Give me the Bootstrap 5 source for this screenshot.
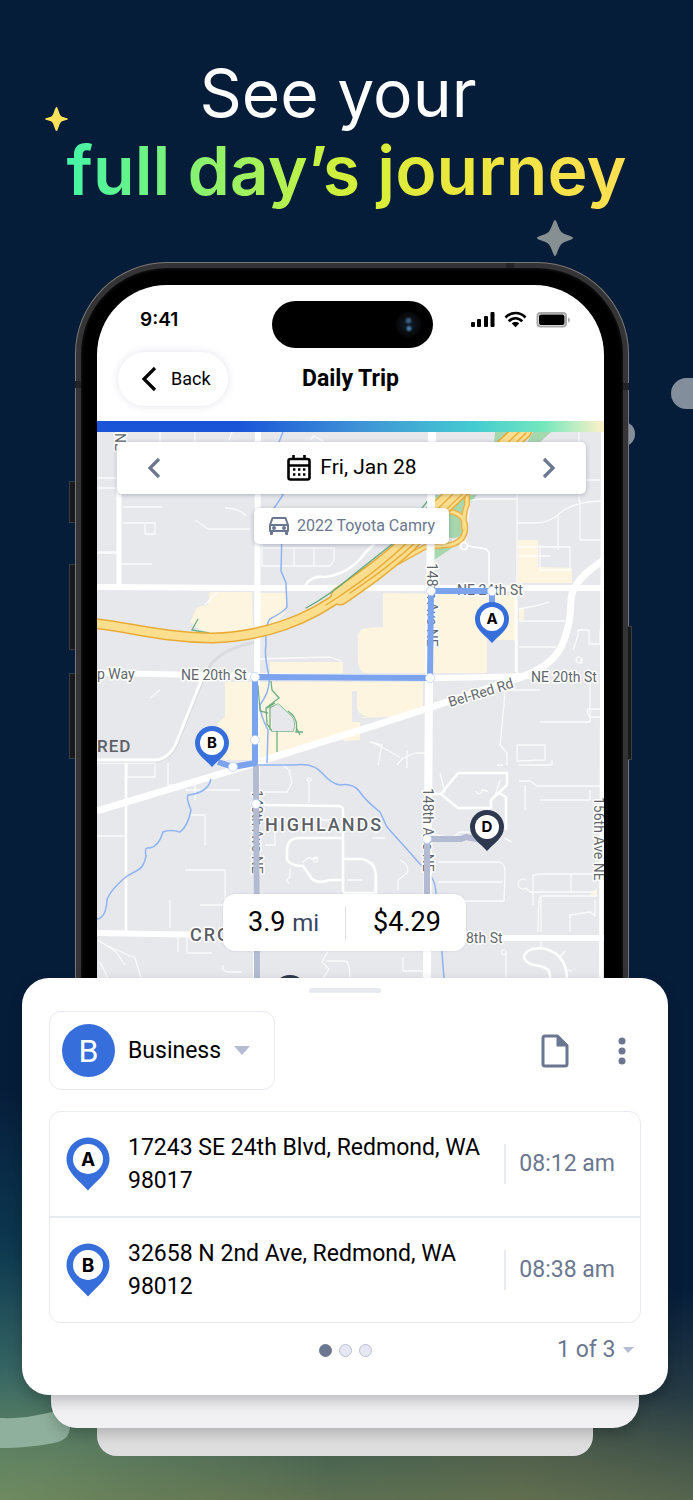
<!DOCTYPE html>
<html lang="en">
<head>
<meta charset="utf-8">
<meta name="viewport" content="width=device-width, initial-scale=1">
<title>Daily Trip</title>
<link href="https://cdn.jsdelivr.net/npm/bootstrap@5.3.0/dist/css/bootstrap.min.css" rel="stylesheet">
<style>
  :root { --navy: #061d3a; --blue: #366fdb; --slate: #6b7790; --line: #e8eaf1; }
  body { font-family: Roboto, "Liberation Sans", sans-serif; background: var(--navy); color: #000; }
  .promo {
    min-height: 100vh;
    padding: 55px 0 44px;
    background:
      radial-gradient(ellipse 95% 210px at 38% 104%, rgba(136,134,76,.85), rgba(122,132,80,.6) 40%, rgba(80,110,90,0) 100%),
      radial-gradient(ellipse 75% 440px at 0 102%, #6a9a74, rgba(62,112,104,.95) 30%, rgba(14,64,86,.75) 65%, rgba(6,29,58,0) 100%),
      linear-gradient(to top, #46584d, rgba(6,29,58,0) 210px),
      var(--navy);
  }
  .headline { font-family: Inter, sans-serif; font-size: 66px; line-height: 77px; font-weight: 400; color: #fff; padding-right: 17px; }
  .headline-strong { font-size: 68px; font-weight: 600; margin-right: -17px; }
  .headline-strong span { background: linear-gradient(90deg, #45f5a6, #8df26c 25%, #d2f03a 50%, #ebe73c 70%, #ffdf52); -webkit-background-clip: text; background-clip: text; color: transparent; }
  .deco { position: absolute; }
  .deco-spark { left: 44px; top: 106px; }
  .deco-star { left: 536px; top: 219px; }
  .deco-pill { left: 671px; right: 0; top: 378px; height: 31px; border-radius: 16px 0 0 16px; background: #838e9d; }
  .deco-dot { left: 612px; top: 422px; width: 23px; height: 24px; border-radius: 12px; background: #838e9d; }
  .deco-swoosh { left: 0; bottom: 50px; }

  .phone { margin: 53px 64px -12px 75px; padding: 23px 25px 12px 22px; border-radius: 92px 92px 0 0; background: #000;
    box-shadow: inset 0 0 0 1px #77777a, inset 0 0 0 6px #343436, inset 0 0 3px 7px #151515; }
  .side-key { position: absolute; background: #17191d; border: 1px solid #3c3e42; width: 6px; }
  .key-l { left: -6px; border-right: 0; }
  .key-r { right: -3px; width: 4px; border-left: 0; }
  .key-1 { top: 219px; height: 42px; } .key-2 { top: 302px; height: 86px; }
  .key-3 { top: 411px; height: 86px; } .key-4 { top: 364px; height: 134px; }
  .band { position: absolute; background: #232325; }
  .band-l { left: 0; top: 119px; width: 6px; height: 7px; }
  .band-r { right: 0; top: 121px; width: 6px; height: 7px; }
  .band-t { right: 115px; top: 1px; width: 8px; height: 5px; }
  .screen { background: #fff; border-radius: 70px 70px 0 0; overflow: hidden; }
  .status { height: 67px; padding: 2px 34px 0 43px; }
  .clock { font: 600 19px/24px Inter, sans-serif; }
  .island { left: 175px; top: 16px; width: 161px; height: 47px; border-radius: 24px; background: #000; }
  .lens { right: 12px; top: 11px; width: 25px; height: 25px; border-radius: 50%; background: radial-gradient(circle at 50% 35%, #3c5d7c 0 6%, rgba(0,0,0,0) 20%), radial-gradient(circle at 52% 66%, #4a7ba6 0 4%, rgba(0,0,0,0) 18%), radial-gradient(circle, #0c1722 25%, #08090b 60%); }
  .titlebar { display: grid; grid-template-columns: 1fr auto 1fr; align-items: center; padding: 0 21px 15px; }
  .back-btn { justify-self: start; height: 54px; padding: 0 17px 0 23px; border: 0; border-radius: 27px; background: #fff; font-size: 18px; line-height: 24px; gap: 14px; box-shadow: 0 0 8px rgba(40,50,90,.13); }
  .title { font-size: 23px; line-height: 28px; font-weight: 700; }
  .rainbow { height: 11px; background: linear-gradient(90deg, #1a55d8 0, #1a55d8 28%, #3f93d6 52%, #45cdd0 75%, #74e7bd 88%, #f4f1c8 99%); }
  .map-art { display: block; width: 100%; height: auto; background: #e7e8ec; }
  .over-top { top: 10px; left: 20px; right: 18px; }
  .over-bottom { bottom: 27px; left: 0; right: 12px; }
  .float-box { background: #fff; border-radius: 5px; box-shadow: 0 1px 4px rgba(40,50,80,.3); }
  .datebar { height: 52px; padding: 0 29px; font-size: 21px; }
  .plain { border: 0; background: none; padding: 0; line-height: 0; color: var(--slate); }
  .carbox { height: 36px; margin-top: 14px; padding: 0 14px; font-size: 16px; color: var(--slate); gap: 7px; }
  .stats { height: 57px; border-radius: 12px; padding: 0 25px; font-size: 27px; box-shadow: 0 0 2px rgba(40,50,80,.15); }
  .stats small { font-size: 24px; color: #39455f; }
  .stats .split { width: 1px; height: 34px; background: #dfe2ec; margin: 0 27px 0 26px; }

  .sheet { background: #fff; margin: 0 25px 0 22px; padding: 10px 27px 29px; border-radius: 27px; z-index: 3; box-shadow: 0 6px 14px rgba(0,0,0,.22); }
  .grab { width: 72px; height: 5px; border-radius: 3px; background: var(--line); margin: 0 auto 18px; }
  .category { height: 79px; width: 226px; padding-left: 12px; border: 1px solid var(--line); border-radius: 12px; }
  .cat-badge { width: 53px; height: 53px; border-radius: 50%; background: var(--blue); color: #fff; font-size: 32px; }
  .pick { appearance: none; border: 0; outline-offset: 2px; background-color: transparent; background-repeat: no-repeat; font-size: 23px; line-height: 32px; padding: 0; }
  .pick-cat { width: 124px; margin-left: 13px; color: #000; background-image: url("data:image/svg+xml,%3Csvg xmlns='http://www.w3.org/2000/svg' width='16' height='9'%3E%3Cpath fill='%23b3bcd2' d='M0 0h16L8 9z'/%3E%3C/svg%3E"); background-position: right 2px center; }
  .pick-page { width: 77px; color: var(--slate); background-image: url("data:image/svg+xml,%3Csvg xmlns='http://www.w3.org/2000/svg' width='11' height='6'%3E%3Cpath fill='%23b3bcd2' d='M0 0h11L5 6z'/%3E%3C/svg%3E"); background-position: right center; }
  .tools { gap: 48px; padding-right: 14px; }
  .stops { margin-top: 21px; border: 1px solid var(--line); border-radius: 12px; }
  .stop { padding: 19px 25px 19px 16px; font-size: 23px; line-height: 33px; }
  .stop + .stop { border-top: 2px solid var(--line); }
  .stop-place { margin-left: 18px; }
  .stop-time { border-left: 2px solid var(--line); padding: 3px 0 3px 13px; line-height: 34px; color: var(--slate); white-space: nowrap; margin-left: 10px; }
  .pager { margin-top: 11px; padding-right: 7px; display: grid; grid-template-columns: 1fr auto 1fr; align-items: center; }
  .dots { grid-column: 2; gap: 7px; padding-left: 7px; }
  .dots button { width: 13px; height: 13px; padding: 0; border-radius: 50%; border: 1px solid #b9bfd3; background: #e5e8f2; }
  .dots button.on { background: var(--slate); border-color: var(--slate); }
  .under-1 { height: 33px; margin: 0 54px 0 51px; background: #f1f1f4; border-radius: 0 0 26px 26px; z-index: 2; box-shadow: 0 6px 14px rgba(0,0,0,.2); }
  .under-2 { height: 28px; margin: 0 100px 0 97px; background: #dedede; border-radius: 0 0 20px 20px; z-index: 1; }
</style>
</head>
<body>
<main class="promo position-relative overflow-hidden">
  <svg class="deco deco-spark" width="25" height="26" viewBox="0 0 25 26" aria-hidden="true"><path d="M12.500 1C14 1 15 8 17 10C18.500 11.500 24 12 24 13S18.500 14.500 17 16C15 18 14 25 12.500 25S10 18 8 16C6.500 14.500 1 14 1 13S6.500 11.500 8 10C10 8 11 1 12.500 1Z" fill="#ffe15a"/></svg>
  <svg class="deco deco-star" width="38" height="38" viewBox="0 0 38 38" aria-hidden="true"><path d="M19 1C21 1 22 10 26 13.500C29 16 37 17 37 19S29 22 26 24.500C22 28 21 37 19 37S16 28 12 24.500C9 22 1 21 1 19S9 16 12 13.500C16 10 17 1 19 1Z" fill="#868f91"/></svg>
  <div class="deco deco-pill"></div>
  <div class="deco deco-dot"></div>
  <svg class="deco deco-swoosh" width="72" height="42" viewBox="0 0 72 42" aria-hidden="true"><path d="M0 10C22 11 40 7 52 4C63 1 70 9 70 17C70 26 67 31 58 34C40 38 20 40 0 40Z" fill="#8fb09c"/></svg>

  <h1 class="headline text-center mb-0">See your
    <strong class="headline-strong d-block"><span>full day’s journey</span></strong>
  </h1>

  <section class="phone position-relative">
    <i class="side-key key-l key-1"></i><i class="side-key key-l key-2"></i><i class="side-key key-l key-3"></i><i class="side-key key-r key-4"></i>
    <i class="band band-l"></i><i class="band band-r"></i><i class="band band-t"></i>
    <div class="screen">
      <div class="status position-relative d-flex align-items-center justify-content-between">
        <span class="clock">9:41</span>
        <div class="island position-absolute"><div class="lens position-absolute"></div></div>
        <svg width="100" height="18" viewBox="0 0 100 18" aria-label="Signal, Wi-Fi and battery">
          <rect x="1" y="11" width="4" height="5" rx="1"/><rect x="7" y="8" width="4" height="8" rx="1"/><rect x="14" y="5" width="4" height="11" rx="1"/><rect x="20.500" y="1" width="4" height="15" rx="1"/>
          <g fill="none" stroke="#000" stroke-width="2.600"><path d="M35.500 6.500C41 .500 50 .500 55.500 6.500"/><path d="M38.800 10.300C42.500 6.200 48.500 6.200 52.200 10.300"/></g><path d="M45.500 16.200L41.800 12.400C43.500 10.600 47.500 10.600 49.200 12.400Z"/>
          <rect x="67.500" y="2" width="28.500" height="13.500" rx="3" fill="none" stroke="#a8a8a8" stroke-width="2"/><rect x="69" y="3.500" width="25.500" height="10.500" rx="2"/><path d="M98 6.500Q100 7 100 9T98 11.500Z" fill="#a8a8a8"/>
        </svg>
      </div>
      <div class="titlebar">
        <button class="back-btn d-flex align-items-center" type="button">
          <svg width="16" height="26" viewBox="0 0 16 26" aria-hidden="true"><path d="M14 2L3 13L14 24" fill="none" stroke="#000" stroke-width="3.200"/></svg>Back
        </button>
        <span class="title">Daily Trip</span>
      </div>
      <div class="rainbow"></div>
      <div class="position-relative">
        <svg class="map-art" viewBox="97 432 507 546" role="img" aria-label="Trip map" font-family="Roboto, sans-serif">
          <defs>
            <g id="pin"><path d="M0 24C-6 17-17 11-17 0A17 17 0 0 1 17 0C17 11 6 17 0 24Z"/><circle r="12" fill="#fff"/></g>
          </defs>
          <!-- commercial blocks -->
          <g fill="#fdf5df">
            <path d="M210 592H252L253 633L207 635L190 622L197 607L208 605Z"/><path d="M260 593H287L285 613L268 630L260 632Z"/>
            <path d="M270 662H343V673H270Z"/><path d="M358 636Q359 629 366 628L383 627V593L515 595V640H487V673H366Q358 672 358 660Z"/>
            <path d="M260 682H423V707L413 716L360 718V740L345 741L335 736L276 755L260 760Z"/><path d="M225 682H253V760H222L218 723L225 717Z"/>
            <path d="M518 540H538V567L572 568V583H518Z"/><path d="M519 608H524V620H519ZM590 895L597 888V896Z"/>
          </g>
          <path d="M352 691H357V708Q360 717 368 716L360 718V722H352Z" fill="#e7e8ec"/>
          <!-- parkland beside the freeway -->
          <g fill="#a6d7ae"><path d="M495 432H512L502 444H494ZM533 432H551L538 444H526ZM432 495H477L462 514L440 518L428 512Z"/><circle cx="453" cy="526" r="12"/><path d="M330 592L400 541L428 505L434 515L404 552ZM434 548H452L434 560Z"/></g>
          <!-- small streets -->
          <g fill="none" stroke="#fff" stroke-width="1.300" stroke-linejoin="round" opacity=".8">
            <path d="M97 478H117M97 488H117M97 553H119M160 432V442M195 432V442M232 432L229 440M98 552H119M123 507H162M123 523H155V534H145V524M122 564H152M195 520L208 529H250M225 508Q240 508 246 516M262 535V566H330L334 560V548H262M294 547V565M314 547V565M310 440L314 436L324 442"/>
            <path d="M97 763H155M127 763V777H155V764M168 763V785H195M195 783V800M255 659L330 657L341 661M205 605L217 592M97 836H126M170 900V928M178 935V952M187 935V953H212M223 965V969Q224 972 230 972H242M98 940L116 952L125 965M106 945L135 958L141 978M100 962L108 978M328 951L322 962L329 969L323 978M326 961H345Q350 962 350 978"/>
            <path d="M465 545L470 501Q474 499 480 499H517M517 482V673M517 523H535Q550 523 560 513Q575 501 604 501M579 432V502M517 480H604M580 500V540H604M558 515V550M517 547H570V570H540V545M519 556H550M519 609L535 606L549 602M519 621H565M519 647H556M518 672L509 680M505 681L504 705L500 745L507 753V765M517 745H545V760L517 761V745M588 709H604V717H590Q586 713 588 709ZM573 650L578 635V630H589V644H600V630M580 657A3 3 0 1 0 581 657.500V664M540 722H590V680M490 690H540M397 765L403 758L415 753H430M407 768V750M370 742L382 745L378 765M372 742L400 757"/>
            <path d="M262 792H287L292 783L289 770L282 764M309 780V803M309 778A1.800 1.800 0 1 0 309.500 778M265 845H275V820H330M262 910V893M275 900H310M325 935L311 944L297 935M290 878A2.500 2.500 0 1 0 289 883M290 878V868M318 859A2.500 2.500 0 1 0 318 860M318 859L308 858L303 862M347 880H362M440 773L445 793M432 834L452 838L460 832H470M438 862H500Q505 864 505 871L504 901H437M438 882H503M504 838L512 842M500 780L495 796M476 791A3 3 0 1 0 482 790L488 791M503 765H497M519 781H530L537 786H602M519 765H552V760M525 785V810M540 800H590V790M533 905V875L540 874H600M541 932V896H597M571 874V893M540 897Q538 902 538 932M570 932V915L590 912L595 916V900M526 880A5 5 0 1 0 526 888L530 892H595M403 957V971H430M505 950A2.500 2.500 0 1 0 506 951V978M541 940V947M565 951L560 957M572 971L565 969"/>
            <path d="M385 838H372M400 860Q410 865 407 873L398 880V890M372 862Q376 864 375 880V893M160 690L150 698M185 790H240M190 815H205V845M185 870H225V900M200 905H245"/>
          </g>
          <g fill="none" stroke="#fff" stroke-width="2.500" stroke-linejoin="round">
            <path d="M126 762V932M343 892V810Q343 806 338 806L264 805M298 838H343M300 838Q287 838 287 850V860Q292 866 303 866L312 879Q318 884 330 880H345M343 859H362Q375 862 376 876V893H343M431 794H441L458 773H507V785L491 800V808H458L441 794M498 792L506 797V830M550 978Q551 968 540 966Q524 964 524 956Q527 948 541 948Q566 952 567 978"/>
            <path d="M305 586Q311 575 325 577Q350 574 365 553L378 540M516 590V672"/>
          </g>
          <path d="M97 761H157Q172 758 178 742L202 682L211 664Q225 648 256 642" fill="none" stroke="#dadbde" stroke-width="3"/>
          <path d="M97 760H157Q171 757 177 741L201 681L206 670" fill="none" stroke="#fff" stroke-width="3"/>
          <!-- arterials -->
          <g fill="none" stroke="#fff" stroke-linejoin="round">
            <path d="M97 587L260 588L604 588M97 673L255 676L445 678L530 676" stroke-width="6"/>
            <path d="M119 432V587" stroke-width="5"/><path d="M258 432L256 978" stroke-width="6"/>
            <path d="M603 432L601 978" stroke-width="4"/>
            <path d="M97 811L233 770L370 727L447 702L513 680Q552 668 562 645Q571 625 571 600Q572 580 604 560" stroke-width="7"/>
            <path d="M97 933L215 935M500 938H604" stroke-width="6"/>
          </g>
          <!-- creeks and trails -->
          <g fill="none" stroke="#8fb3f3" stroke-width="1.500">
            <path d="M283 432L275 452L279 470L274 488L283 495L274 508L282 530L281 571L286 583L287 607Q285 611 270 619Q265 625 266 645Q264 655 269 676Q271 690 260 705Q260 715 268 730L267 763"/>
            <path d="M257 765H293Q314 762 323 774Q332 784 340 785Q353 783 359 791Q366 801 380 812L387 827Q405 847 420 864Q435 875 436 893L442 953L444 978"/>
            <path d="M211 779Q208 793 188 795Q186 798 191 810Q188 826 180 832Q170 829 163 832Q159 846 150 848Q144 846 146 856Q144 867 138 870L127 876Q110 890 107 900Q106 918 97 919"/>
          </g>
          <g fill="none" stroke="#6faf86" stroke-width="1.300"><path d="M198 619L192 630L209 633M271 681L272 690L279 698L266 708L267 724L272 731H293Q297 720 288 713L278 704L270 708V730M258 685L260 711L268 713M288 711Q299 718 296 732L303 732M277 731V752M296 727L300 735M267 708L275 703"/></g>
          <path d="M272 731H293Q297 720 288 713L278 704L271 708Z" fill="#e7e8ec"/>
          <!-- freeway -->
          <g fill="none" stroke-linecap="round">
            <path d="M398 562L425 547L450 545Q467 541 465 524Q462 512 446 511M464 528Q463 513 467 505V492" stroke="#e9b44c" stroke-width="6"/>
            <path d="M398 562L425 547L450 545Q467 541 465 524Q462 512 446 511M464 528Q463 513 467 505V492" stroke="#fbdf8f" stroke-width="3"/>
            <path d="M90 623C130 627 165 638 212 638C262 637 310 620 345 592" stroke="#e9ab36" stroke-width="11"/>
            <path d="M340 596C370 576 402 552 424 527C440 506 460 490 523 430" stroke="#e9ab36" stroke-width="19"/>
            <path d="M340 596C370 576 402 552 424 527C440 506 460 490 523 430" stroke="#fadd8e" stroke-width="16"/>
            <path d="M90 623C130 627 165 638 212 638C262 637 310 620 345 592" stroke="#fbdf8f" stroke-width="8"/>
            <path d="M326 605C370 577 402 550 424 525C440 504 460 488 521 430M350 593C380 573 404 555 427 531C443 510 462 496 526 433" stroke="#e9ab36" stroke-width="1.300"/>
            <path d="M306 608Q330 595 352 576L396 541L430 498" stroke="#63a97b" stroke-width="1.300"/>
          </g>
          <path d="M432 432L429 678L427 978" fill="none" stroke="#fff" stroke-width="8"/>
          <circle cx="464" cy="546" r="3.500" fill="#e7e8ec" stroke="#fff" stroke-width="2"/><path d="M468 546L486 549L489 553V590" fill="none" stroke="#fff" stroke-width="1.500"/>
          <!-- labels -->
          <g fill="#62666c" font-size="14" stroke="#fff" stroke-width="3" stroke-linejoin="round" paint-order="stroke">
            <text x="97" y="679">p Way</text><text x="181" y="680">NE 20th St</text><text x="531" y="682">NE 20th St</text><text x="457" y="595">NE 24th St</text>
            <text x="466" y="943">8th St</text>
            <text transform="translate(450 707) rotate(-17)">Bel-Red Rd</text>
            <text transform="translate(427 563) rotate(90)">148th Ave NE</text><text transform="translate(423 788) rotate(90)">148th Ave NE</text>
            <text transform="translate(252 790) rotate(90)">140th Ave NE</text><text transform="translate(594 797) rotate(90)">156th Ave NE</text>
            <text transform="translate(115 433) rotate(90)">NE</text>
          </g>
          <g fill="#5d6066" font-size="18" font-weight="500" letter-spacing="2" stroke="#fff" stroke-width="3" stroke-linejoin="round" paint-order="stroke">
            <text x="265" y="831">HIGHLANDS</text><text x="190" y="941">CROS</text>
          </g>
          <text x="97" y="752" font-size="17" font-weight="500" letter-spacing="1" fill="#5d6066">RED</text>
          <!-- route -->
          <g fill="none" stroke-width="6" stroke-linejoin="round">
            <path d="M256 765L257 978M427 839V900M427 839H461L466 837L487 841" stroke="#b2bbd1"/>
            <path d="M492 606V591H431L430 678L255 677V763L233 767L218 762" stroke="#7ca3ee"/>
          </g>
          <g fill="#fff" stroke="#b8cdf5" stroke-width=".7"><circle cx="431" cy="591" r="4.500"/><circle cx="492" cy="591" r="4.500"/><circle cx="430" cy="678" r="4.500"/><circle cx="255" cy="677" r="4.500"/><circle cx="255" cy="740" r="4.500"/><circle cx="233" cy="767" r="4.500"/><circle cx="256" cy="804" r="4.500"/><circle cx="427" cy="839" r="4.500"/></g>
          <use href="#pin" x="492" y="619" fill="#366fdb"/><use href="#pin" x="212" y="743" fill="#366fdb"/><use href="#pin" x="487" y="827" fill="#2e394f"/><use href="#pin" x="290" y="992" fill="#2e394f"/>
          <g font-family="Inter, sans-serif" font-size="15" font-weight="700" text-anchor="middle"><text x="492" y="624">A</text><text x="212" y="748">B</text><text x="487" y="832">D</text></g>
        </svg>
        <div class="over-top position-absolute d-flex flex-column align-items-center">
          <div class="datebar float-box w-100 d-flex align-items-center justify-content-between">
            <button class="plain" type="button" aria-label="Previous day"><svg width="15" height="22" viewBox="0 0 15 22"><path d="M13 2L4 11L13 20" fill="none" stroke="currentColor" stroke-width="3.200"/></svg></button>
            <span class="d-flex align-items-center gap-2">
              <svg width="26" height="28" viewBox="0 0 26 28" aria-hidden="true"><rect x="2.500" y="5" width="21" height="20.500" rx="2" fill="none" stroke="#000" stroke-width="2.600"/><path d="M2 11.500H24M7.500 1V6M18.500 1V6" stroke="#000" stroke-width="2.600" fill="none"/><path d="M7 15.500H19.500M7 20.500H19.500" stroke="#000" stroke-width="2.400" stroke-dasharray="2.400 2.600"/></svg>
              Fri, Jan 28
            </span>
            <button class="plain" type="button" aria-label="Next day"><svg width="15" height="22" viewBox="0 0 15 22"><path d="M2 2L11 11L2 20" fill="none" stroke="currentColor" stroke-width="3.200"/></svg></button>
          </div>
          <div class="carbox float-box d-flex align-items-center">
            <svg width="22" height="20" viewBox="0 0 22 20" fill="none" stroke="currentColor" stroke-width="2" aria-hidden="true"><path d="M2 9L4.500 2H17.500L20 9V15H2ZM2 9H20M3.200 15V19M18.800 15V19" stroke-linejoin="round"/><path d="M2 17H5M17 17H20" stroke-width="3"/><circle cx="6" cy="12" r="1" /><circle cx="16" cy="12" r="1"/></svg>
            2022 Toyota Camry
          </div>
        </div>
        <div class="over-bottom position-absolute d-flex justify-content-center">
          <div class="stats bg-white d-flex align-items-center"><span>3.9 <small>mi</small></span><span class="split"></span><span>$4.29</span></div>
        </div>
      </div>
    </div>
  </section>

  <section class="sheet position-relative">
    <div class="grab"></div>
    <div class="d-flex align-items-center justify-content-between">
      <div class="category d-flex align-items-center">
        <span class="cat-badge d-flex align-items-center justify-content-center flex-shrink-0">B</span>
        <select class="pick pick-cat" aria-label="Trip category"><option>Business</option><option>Personal</option></select>
      </div>
      <div class="tools d-flex align-items-center">
        <button class="plain" type="button" aria-label="Notes"><svg width="28" height="34" viewBox="0 0 28 34"><path d="M4 2H16.500L26 11.500V30Q26 32 24 32H4Q2 32 2 30V4Q2 2 4 2Z" fill="none" stroke="currentColor" stroke-width="3" stroke-linejoin="round"/><path d="M15.500 2V12.500H26Z" fill="currentColor"/></svg></button>
        <button class="plain" type="button" aria-label="More"><svg width="10" height="28" viewBox="0 0 10 28" fill="currentColor"><circle cx="5" cy="4" r="3.500"/><circle cx="5" cy="14" r="3.500"/><circle cx="5" cy="24" r="3.500"/></svg></button>
      </div>
    </div>
    <ul class="stops list-unstyled mb-0">
      <li class="stop d-flex align-items-center">
        <svg class="flex-shrink-0" width="44" height="54" viewBox="0 0 44 54"><path d="M22 53.500C14 44 .500 36 .500 22A21.500 21.500 0 0 1 43.500 22C43.500 36 30 44 22 53.500Z" fill="#366fdb"/><circle cx="22" cy="22" r="15" fill="#fff"/><text x="22" y="29" text-anchor="middle" font-family="Inter, sans-serif" font-size="19" font-weight="700">A</text></svg>
        <span class="stop-place flex-fill">17243 SE 24th Blvd, Redmond, WA 98017</span>
        <time class="stop-time">08:12 am</time>
      </li>
      <li class="stop d-flex align-items-center">
        <svg class="flex-shrink-0" width="44" height="54" viewBox="0 0 44 54"><path d="M22 53.500C14 44 .500 36 .500 22A21.500 21.500 0 0 1 43.500 22C43.500 36 30 44 22 53.500Z" fill="#366fdb"/><circle cx="22" cy="22" r="15" fill="#fff"/><text x="22" y="29" text-anchor="middle" font-family="Inter, sans-serif" font-size="19" font-weight="700">B</text></svg>
        <span class="stop-place flex-fill">32658 N 2nd Ave, Redmond, WA 98012</span>
        <time class="stop-time">08:38 am</time>
      </li>
    </ul>
    <div class="pager">
      <div class="dots d-flex"><button class="on" type="button" aria-label="Trip 1"></button><button type="button" aria-label="Trip 2"></button><button type="button" aria-label="Trip 3"></button></div>
      <div class="d-flex justify-content-end"><select class="pick pick-page" aria-label="Trip number"><option>1 of 3</option><option>2 of 3</option><option>3 of 3</option></select></div>
    </div>
  </section>
  <div class="under-1 position-relative"></div>
  <div class="under-2 position-relative"></div>
</main>
<script src="https://cdn.jsdelivr.net/npm/bootstrap@5.3.0/dist/js/bootstrap.bundle.min.js"></script>
</body>
</html>
